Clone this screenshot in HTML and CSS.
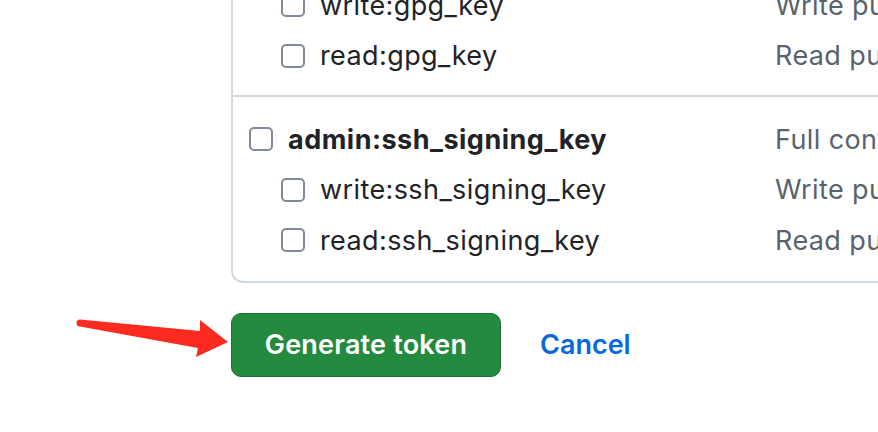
FILE: index.html
```html
<!DOCTYPE html>
<html>
<head>
<meta charset="utf-8">
<link rel="stylesheet" href="styles.css">
</head>
<body>
<div class="page">
  <div class="scopes">
    <div class="group group-first">
      <div class="row sub">
        <label class="name"><span class="cb"></span>write:gpg_key</label>
        <span class="desc">Write public user GPG keys</span>
      </div>
      <div class="row sub">
        <label class="name"><span class="cb"></span>read:gpg_key</label>
        <span class="desc">Read public user GPG keys</span>
      </div>
    </div>
    <div class="group">
      <div class="row">
        <label class="name bold"><span class="cb"></span>admin:ssh_signing_key</label>
        <span class="desc">Full control of public user SSH signing keys</span>
      </div>
      <div class="row sub">
        <label class="name"><span class="cb"></span>write:ssh_signing_key</label>
        <span class="desc">Write public user SSH signing keys</span>
      </div>
      <div class="row sub">
        <label class="name"><span class="cb"></span>read:ssh_signing_key</label>
        <span class="desc">Read public user SSH signing keys</span>
      </div>
    </div>
  </div>
  <div class="actions">
    <button class="btn-primary">Generate token</button>
    <a class="cancel" href="#">Cancel</a>
    <svg class="arrow" width="240" height="60" viewBox="0 0 240 60">
      <path d="M80 9.5 L200 21 L200 10 L228 32 L196 47 L198 38 L80 16.5 A3.5 3.5 0 0 1 80 9.5 Z" fill="#fc2a1f"/>
    </svg>
  </div>
</div>
</body>
</html>
```
FILE: styles.css
```css
html, body {
  margin: 0;
  padding: 0;
  background: #ffffff;
  overflow: hidden;
}
body {
  width: 878px;
  height: 432px;
  font-family: Inter, "Liberation Sans", sans-serif;
  color: #1f2328;
}
.page {
  padding-left: 231px;
  padding-top: 1px;
}
.scopes {
  margin-top: -35px;
  width: 800px;
  border: 2px solid #d1d9e0;
  border-top: none;
  border-right: none;
  border-radius: 0 0 0 12px;
}
.group {
  padding: 14px 0 14px 16px;
}
.group + .group {
  border-top: 2px solid #d1d9e0;
  padding-top: 17px;
  padding-bottom: 15px;
}
.row {
  display: flex;
  align-items: center;
  height: 50.5px;
}
.name {
  display: flex;
  align-items: center;
  width: 526px;
  font-size: 27px;
  letter-spacing: 0.4px;
  flex-shrink: 0;
}
.sub .name {
  padding-left: 32px;
  width: 494px;
}
.bold {
  font-weight: 700;
  letter-spacing: 0.5px;
}
.cb {
  width: 20px;
  height: 20px;
  border: 2px solid #818b98;
  border-radius: 5px;
  margin-right: 15px;
  flex-shrink: 0;
  background: #fff;
}
.desc {
  font-size: 27px;
  letter-spacing: 0.4px;
  color: #59636e;
  white-space: nowrap;
}
.actions {
  position: relative;
  display: flex;
  align-items: center;
  margin-top: 30px;
  gap: 39px;
}
.btn-primary {
  width: 270px;
  height: 64px;
  background: #238a3f;
  color: #ffffff;
  border: 1.5px solid #1c7033;
  border-radius: 10px;
  font-family: Inter, "Liberation Sans", sans-serif;
  font-size: 27px;
  letter-spacing: 0.2px;
  font-weight: 600;
  padding: 0;
}
.cancel {
  color: #0969da;
  font-size: 27px;
  font-weight: 600;
  text-decoration: none;
}
.arrow {
  position: absolute;
  left: -231px;
  top: -3px;
}
```
